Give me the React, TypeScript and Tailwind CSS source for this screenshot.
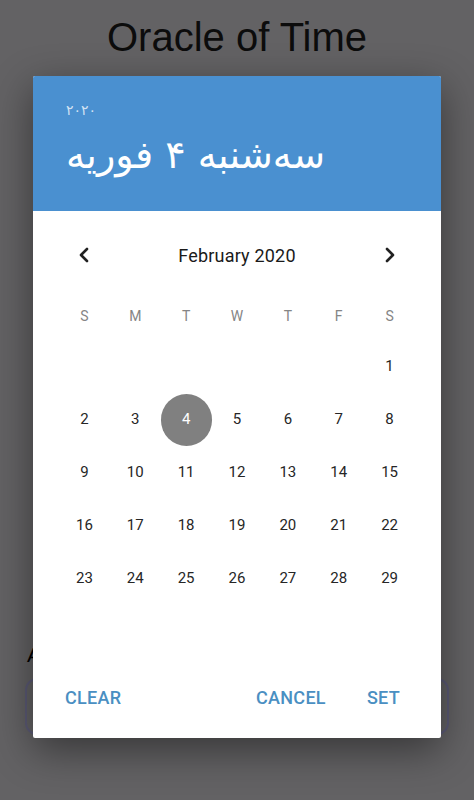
import React from 'react';
import { ChevronLeft, ChevronRight } from 'lucide-react';

// ===== CALENDAR DATA =====
const weekDays = ['S', 'M', 'T', 'W', 'T', 'F', 'S'];

// February 2020 starts on a Saturday
const cells: (number | null)[] = [
  null, null, null, null, null, null, 1,
  ...Array.from({ length: 28 }, (_, i) => i + 2),
];

const selectedDay = 4;

const DatePickerDialog: React.FC = () => {
  return (
    <div className="absolute left-[33px] top-[76px] w-[408px] h-[662px] bg-white rounded-[2px] shadow-[0_12px_40px_rgba(0,0,0,0.45)] flex flex-col overflow-hidden">
      {/* Header */}
      <div className="h-[135px] bg-[#4a90d0] px-[33px] pt-[24px] text-left">
        <p className="text-[14px] leading-[20px] text-white/75 font-['DejaVu_Sans',sans-serif]">۲۰۲۰</p>
        <p className="mt-[12px] text-[38px] leading-[46px] text-white font-['DejaVu_Sans',sans-serif]">
          سه‌شنبه ۴ فوریه
        </p>
      </div>

      {/* Calendar body */}
      <div className="flex-1 px-[26px] pt-[16px] font-['Roboto',sans-serif]">
        <div className="h-[56px] flex items-center justify-between px-[13px] text-[#212121]">
          <ChevronLeft size={24} strokeWidth={2.6} />
          <span className="text-[18px] font-normal tracking-[0.2px] text-[#1a1a1a]">February 2020</span>
          <ChevronRight size={24} strokeWidth={2.6} />
        </div>

        <div className="mt-[11px] h-[44px] grid grid-cols-7 items-center text-center text-[14px] text-[#858585]">
          {weekDays.map((d, i) => (
            <span key={i}>{d}</span>
          ))}
        </div>

        <div className="mt-[2px] grid grid-cols-7">
          {cells.map((day, i) => (
            <div key={i} className="h-[53px] flex items-center justify-center">
              {day !== null &&
                (day === selectedDay ? (
                  <span className="w-[52px] h-[52px] rounded-full bg-[#808080] text-white flex items-center justify-center text-[15px]">
                    {day}
                  </span>
                ) : (
                  <span className="text-[15px] text-[#262626]">{day}</span>
                ))}
            </div>
          ))}
        </div>
      </div>

      {/* Actions */}
      <div className="h-[50px] flex items-start justify-between pl-[32px] pr-[41px] font-['Roboto',sans-serif] text-[18px] font-medium tracking-[0.3px] text-[#4a8fc2]">
        <span className="leading-[20px]">CLEAR</span>
        <div className="flex gap-[41px]">
          <span className="leading-[20px]">CANCEL</span>
          <span className="leading-[20px]">SET</span>
        </div>
      </div>
    </div>
  );
};

const App: React.FC = () => {
  return (
    <div className="relative w-full h-[800px] bg-[#636264] overflow-hidden">
      {/* Page behind the dialog */}
      <div className="flex flex-col h-full">
        <h1 className="pt-[14px] text-center text-[40px] leading-[46px] text-[#0c0c0c] font-['Liberation_Sans',Arial,sans-serif]">
          Oracle of Time
        </h1>
        <div className="flex-1" />
        <div className="px-[25px] pb-[65px]">
          <p className="pl-[2px] text-[21px] leading-[26px] text-black font-['Liberation_Sans',Arial,sans-serif]">
            Age
          </p>
          <div className="mt-[10px] h-[57px] rounded-[12px] border-2 border-[#5b5a75] flex items-center justify-end pr-[4px] text-[#2d2d2d]">
            <span className="text-[12px]">⌄</span>
          </div>
        </div>
      </div>

      <DatePickerDialog />
    </div>
  );
};

export default App;
